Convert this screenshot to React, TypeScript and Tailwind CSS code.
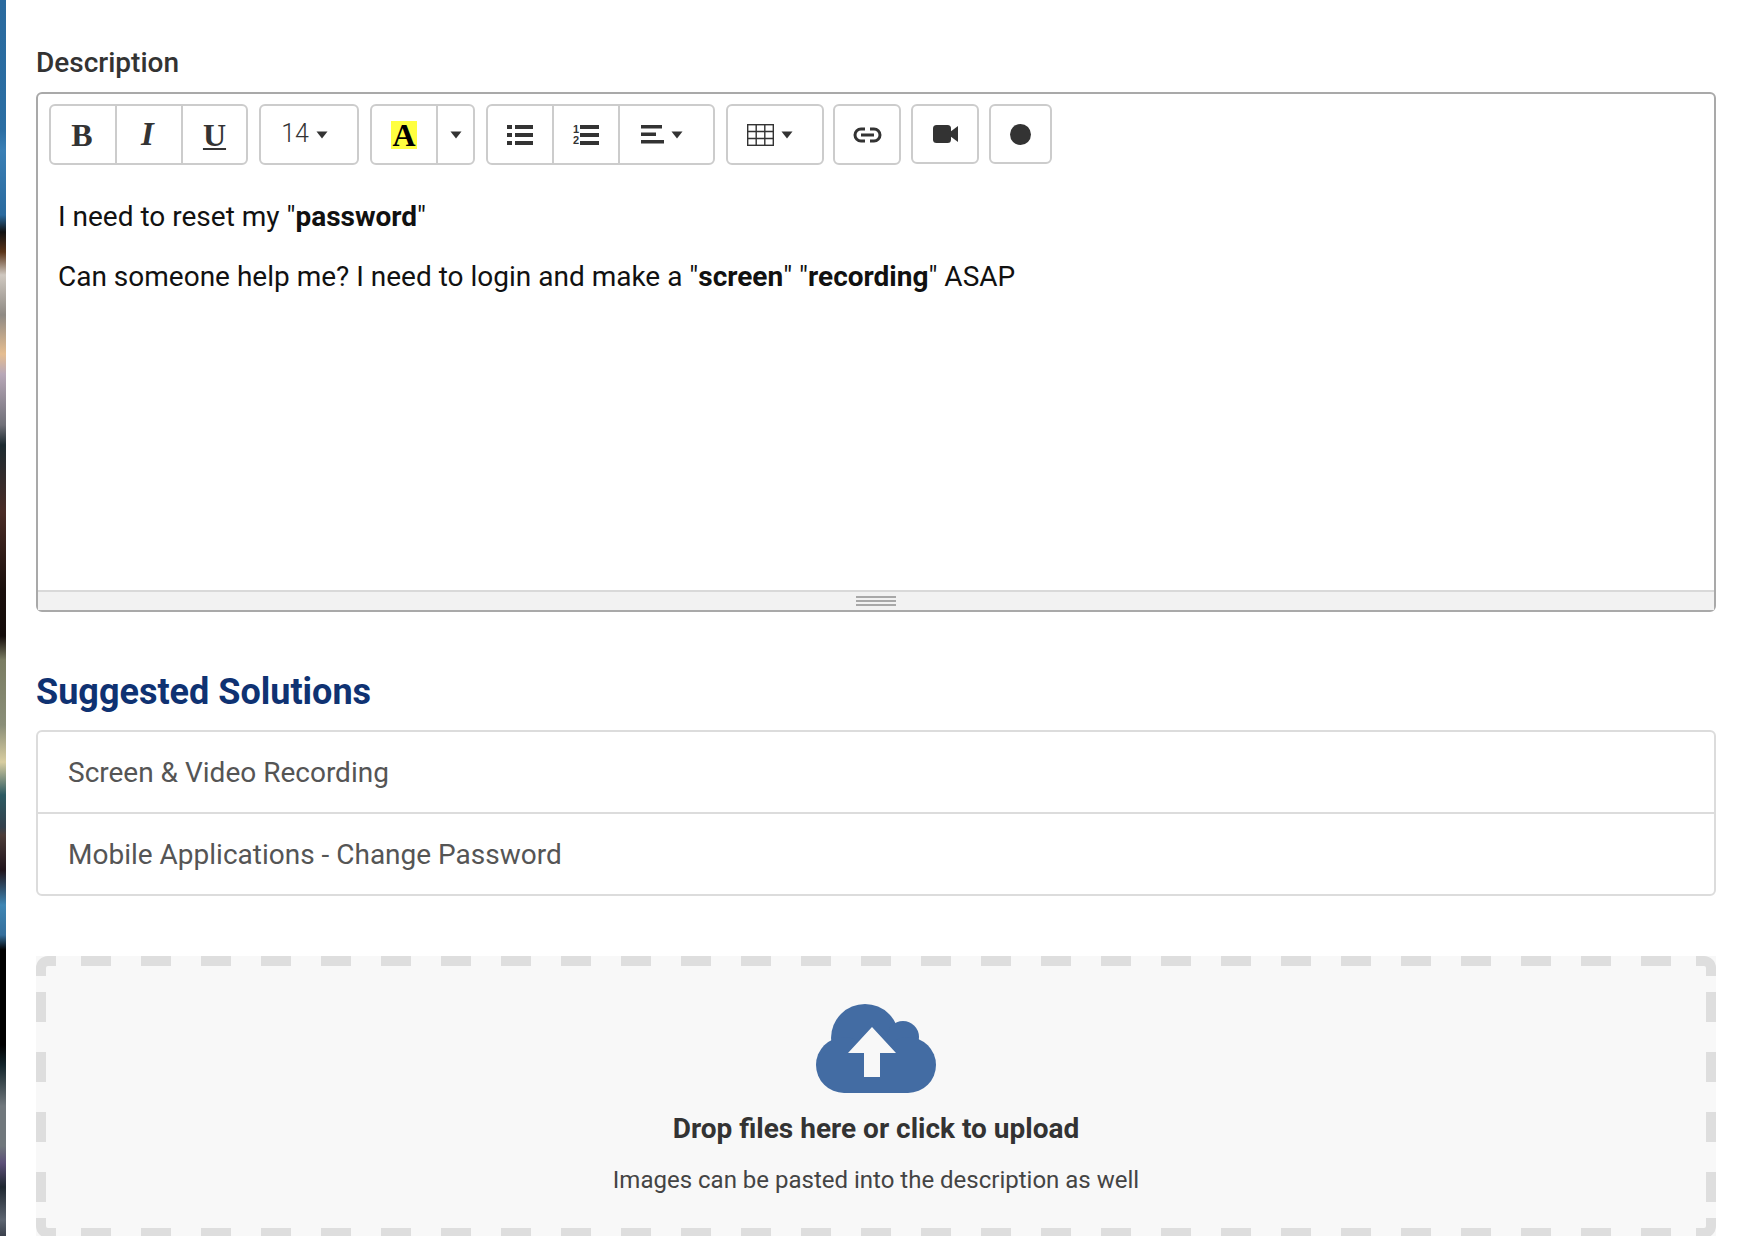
import type { ReactNode } from 'react';

const Caret = () => (
  <svg width="12" height="8" viewBox="0 0 12 8" className="shrink-0">
    <path d="M0.5 0.5h11L6 7.5z" fill="#333" />
  </svg>
);

function Btn({ width, children, divider }: { width: string; children: ReactNode; divider?: boolean }) {
  return (
    <div className={`flex h-full items-center justify-center gap-[7px] ${width} ${divider ? 'border-l-2 border-[#ccc]' : ''}`}>
      {children}
    </div>
  );
}

function Group({ children, short }: { children: ReactNode; short?: boolean }) {
  return <div className={`flex rounded-[6px] border-2 border-[#ccc] bg-white ${short ? 'h-[60px]' : 'h-[61px]'}`}>{children}</div>;
}

const ListBullet = () => (
  <svg width="26" height="22" viewBox="0 0 26 22" fill="#333">
    <rect x="0" y="1" width="5" height="4" />
    <rect x="0" y="9" width="5" height="4" />
    <rect x="0" y="17" width="5" height="4" />
    <rect x="8" y="1" width="18" height="4" />
    <rect x="8" y="9" width="18" height="4" />
    <rect x="8" y="17" width="18" height="4" />
  </svg>
);

const ListNumber = () => (
  <div className="flex items-center gap-px">
    <div className="flex flex-col items-end font-['Liberation_Sans',sans-serif] text-[11px] leading-[11px] font-bold text-[#333]">
      <span>1</span>
      <span>2</span>
    </div>
    <svg width="19" height="22" viewBox="0 0 19 22" fill="#333">
      <rect y="1" width="19" height="4" />
      <rect y="9" width="19" height="4" />
      <rect y="17" width="19" height="4" />
    </svg>
  </div>
);

const AlignLeft = () => (
  <svg width="23" height="19" viewBox="0 0 23 19" fill="#333">
    <rect width="21" height="3.5" y="0" />
    <rect width="15" height="3.5" y="7.5" />
    <rect width="23" height="3.5" y="15" />
  </svg>
);

const TableIcon = () => (
  <svg width="27" height="22" viewBox="0 0 27 22" fill="none" stroke="#333" strokeWidth="1.4">
    <rect x="0.7" y="0.7" width="25.6" height="20.6" />
    <path d="M0.7 7.5h25.6M0.7 14.5h25.6M9.2 0.7v20.6M17.8 0.7v20.6" />
  </svg>
);

const LinkIcon = () => (
  <svg width="29" height="16" viewBox="0 0 29 16" fill="none" stroke="#333" strokeWidth="3">
    <path d="M12 2H8a6 6 0 0 0 0 12h4M17 2h4a6 6 0 0 1 0 12h-4M8 8h13" />
  </svg>
);

const VideoIcon = () => (
  <svg width="25" height="18" viewBox="0 0 25 18" fill="#333">
    <rect x="0" y="0" width="18" height="18" rx="3.5" />
    <path d="M17 7L25 1v16l-8-6z" />
  </svg>
);

const CloudUpload = () => (
  <svg width="120" height="89" viewBox="0 0 120 89" fill="#436ca3">
    <circle cx="49" cy="34" r="34" />
    <circle cx="87" cy="33" r="16" />
    <circle cx="28" cy="61" r="28" />
    <circle cx="92" cy="61" r="28" />
    <rect x="28" y="40" width="64" height="49" />
    <path d="M56 23L80 49H64V73H48V49H32z" fill="#f8f8f8" />
  </svg>
);

const DashedFrame = () => (
  <svg className="absolute inset-0" width="1680" height="282" fill="none" stroke="#dedede" strokeWidth="10">
    <path d="M45 5H1640" strokeDasharray="30 30" />
    <path d="M45 277H1640" strokeDasharray="30 30" />
    <path d="M5 36V250" strokeDasharray="30 30" />
    <path d="M1675 36V250" strokeDasharray="30 30" />
    <path d="M5 20V12a7 7 0 0 1 7-7h8" />
    <path d="M1660 5h8a7 7 0 0 1 7 7v8" />
    <path d="M5 262v8a7 7 0 0 0 7 7h8" />
    <path d="M1660 277h8a7 7 0 0 0 7-7v-8" />
  </svg>
);

export default function App() {
  return (
    <div className="flex h-[1236px] overflow-hidden bg-white font-['Roboto',sans-serif] text-[#333]">
      <div className="w-[6px] shrink-0 bg-[linear-gradient(180deg,#2a6a9e_0,#2b6ea3_130px,#3a7fb5_150px,#2a6a9e_215px,#111_232px,#5a3418_252px,#cfc8c0_275px,#8f8a84_315px,#e5bd90_354px,#b8a8b8_374px,#707078_425px,#1c2a30_445px,#4a2c26_512px,#1a0f0c_590px,#140c0a_636px,#7a7c62_660px,#8a8e78_725px,#d8cda0_762px,#2c5a62_795px,#33404c_827px,#4c3c38_835px,#20141c_870px,#3f86b4_905px,#356f9c_935px,#000_950px,#000_1045px,#12242a_1065px,#70777c_1106px,#70777c_1146px,#5c5078_1163px,#1e2630_1187px,#5c6470_1220px,#3a404c_1236px)]" />
      <main className="w-[1680px] ml-[30px] pt-[46px]">
        <label className="block text-[28px] leading-[34px] font-medium text-[#333]">Description</label>

        <section className="mt-[12px] h-[520px] flex flex-col rounded-[6px] border-2 border-[#a9a9a9]">
          <div className="flex gap-[11px] pl-[11px] pt-[10px]">
            <Group>
              <Btn width="w-[64px]"><span className="pr-[2px] font-['Liberation_Serif',serif] text-[32px] font-bold leading-none">B</span></Btn>
              <Btn width="w-[66px]" divider><span className="pr-[3px] font-['Liberation_Serif',serif] text-[33px] font-bold italic leading-none">I</span></Btn>
              <Btn width="w-[65px]" divider><span className="font-['Liberation_Serif',serif] text-[32px] font-bold leading-none underline decoration-2 underline-offset-2">U</span></Btn>
            </Group>
            <Group>
              <Btn width="w-[96px] pr-[9px]"><span className="pb-[2px] text-[25px] leading-none font-light">14</span><Caret /></Btn>
            </Group>
            <Group>
              <Btn width="w-[64px]"><span className="bg-[#ffff40] px-px font-['Liberation_Serif',serif] text-[32px] font-bold leading-[28px] text-black">A</span></Btn>
              <Btn width="w-[37px]" divider><Caret /></Btn>
            </Group>
            <Group>
              <Btn width="w-[64px]"><ListBullet /></Btn>
              <Btn width="w-[66px]" divider><ListNumber /></Btn>
              <Btn width="w-[95px] pr-[10px]" divider><AlignLeft /><Caret /></Btn>
            </Group>
            <Group>
              <Btn width="w-[94px] pr-[10px]"><TableIcon /><Caret /></Btn>
            </Group>
            <div className="-ml-[2px] flex gap-[10px]">
              <Group>
                <Btn width="w-[64px]"><LinkIcon /></Btn>
              </Group>
              <Group short>
                <Btn width="w-[64px]"><VideoIcon /></Btn>
              </Group>
              <Group short>
                <Btn width="w-[59px]"><span className="size-[21px] rounded-full bg-[#333]" /></Btn>
              </Group>
            </div>
          </div>

          <div className="flex-1 px-[20px] pt-[32px] text-[28px] leading-[40px] text-[#111]">
            <p>I need to reset my "<b>password</b>"</p>
            <p className="mt-[20px]">Can someone help me? I need to login and make a "<b>screen</b>" "<b>recording</b>" ASAP</p>
          </div>

          <div className="flex h-[20px] items-center justify-center border-t-2 border-[#d9d9d9] bg-[#f2f2f2]">
            <div className="flex w-[40px] flex-col gap-[2px]">
              <div className="h-[2px] bg-[#a8a8a8]" />
              <div className="h-[2px] bg-[#a8a8a8]" />
              <div className="h-[2px] bg-[#a8a8a8]" />
            </div>
          </div>
        </section>

        <h2 className="mt-[59px] text-[36px] leading-[42px] font-bold text-[#0f3272]">Suggested Solutions</h2>

        <ul className="mt-[17px] rounded-[6px] border-2 border-[#dcdcdc] text-[28px] text-[#555]">
          <li className="flex h-[82px] items-center border-b-2 border-[#dcdcdc] pl-[30px] pt-[2px]">Screen &amp; Video Recording</li>
          <li className="flex h-[80px] items-center pl-[30px] pt-[2px]">Mobile Applications - Change Password</li>
        </ul>

        <div className="relative mt-[60px] flex h-[282px] flex-col items-center bg-[#f8f8f8] pt-[48px]">
          <DashedFrame />
          <CloudUpload />
          <p className="mt-[18px] text-[28px] leading-[36px] font-bold text-[#333]">Drop files here or click to upload</p>
          <p className="mt-[17px] text-[24px] leading-[32px] text-[#444]">Images can be pasted into the description as well</p>
        </div>
      </main>
    </div>
  );
}
